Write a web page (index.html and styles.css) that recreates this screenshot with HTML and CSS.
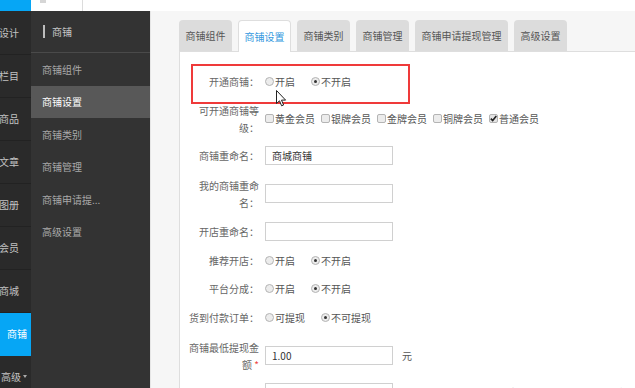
FILE: index.html
```html
<!DOCTYPE html>
<html lang="zh-CN">
<head>
<meta charset="utf-8">
<title>商铺设置</title>
<link rel="stylesheet" href="styles.css">
</head>
<body>
<div class="app">
  <header class="topbar">
    <div class="logo"></div>
    <div class="topnav">
      <div class="topcell"><span class="topicon"></span></div>
    </div>
  </header>
  <div class="layout">
    <nav class="nav1">
      <a class="nav1-item">设计</a>
      <a class="nav1-item">栏目</a>
      <a class="nav1-item">商品</a>
      <a class="nav1-item">文章</a>
      <a class="nav1-item">图册</a>
      <a class="nav1-item">会员</a>
      <a class="nav1-item">商城</a>
      <a class="nav1-item active">商铺</a>
      <a class="nav1-item more">高级<span class="caret"></span></a>
    </nav>
    <nav class="nav2">
      <div class="nav2-head"><span class="bar"></span>商铺</div>
      <a class="nav2-item">商铺组件</a>
      <a class="nav2-item active">商铺设置</a>
      <a class="nav2-item">商铺类别</a>
      <a class="nav2-item">商铺管理</a>
      <a class="nav2-item">商铺申请提...</a>
      <a class="nav2-item">高级设置</a>
    </nav>
    <main class="main">
      <div class="tabs">
        <span class="tab">商铺组件</span>
        <span class="tab active">商铺设置</span>
        <span class="tab">商铺类别</span>
        <span class="tab">商铺管理</span>
        <span class="tab">商铺申请提现管理</span>
        <span class="tab">高级设置</span>
      </div>
      <div class="panel">
        <div class="highlight"></div>
        <svg class="cursor" width="11" height="17" viewBox="0 0 11 17"><path d="M0.5 0.5 L0.5 13.5 L3.5 10.8 L5.6 15.8 L7.6 15 L5.5 10.1 L9.6 10.1 Z" fill="#fff" stroke="#222" stroke-width="1" stroke-linejoin="round"/></svg>
        <form class="form">
          <div class="row">
            <label class="label">开通商铺：</label>
            <span class="opt"><span class="radio"></span>开启</span>
            <span class="opt"><span class="radio on"></span>不开启</span>
          </div>
          <div class="row">
            <label class="label">可开通商铺等级：</label>
            <span class="chk"><span class="box"></span>黄金会员</span>
            <span class="chk"><span class="box"></span>银牌会员</span>
            <span class="chk"><span class="box"></span>金牌会员</span>
            <span class="chk"><span class="box"></span>铜牌会员</span>
            <span class="chk"><span class="box on"><svg width="7" height="7" viewBox="0 0 7 7"><path d="M0.8 3.6 L2.7 5.6 L6.3 1" fill="none" stroke="#222" stroke-width="1.6"/></svg></span>普通会员</span>
          </div>
          <div class="row">
            <label class="label">商铺重命名：</label>
            <span class="input">商城商铺</span>
          </div>
          <div class="row mt11">
            <label class="label">我的商铺重命名：</label>
            <span class="input"></span>
          </div>
          <div class="row mt11">
            <label class="label">开店重命名：</label>
            <span class="input"></span>
          </div>
          <div class="row mt9">
            <label class="label">推荐开店：</label>
            <span class="opt"><span class="radio"></span>开启</span>
            <span class="opt"><span class="radio on"></span>不开启</span>
          </div>
          <div class="row mt8">
            <label class="label">平台分成：</label>
            <span class="opt"><span class="radio"></span>开启</span>
            <span class="opt"><span class="radio on"></span>不开启</span>
          </div>
          <div class="row mt9">
            <label class="label">货到付款订单：</label>
            <span class="opt"><span class="radio"></span>可提现</span>
            <span class="opt"><span class="radio on"></span>不可提现</span>
          </div>
          <div class="row mt11">
            <label class="label">商铺最低提现金额 <i class="req">*</i></label>
            <span class="input">1.00</span>
            <span class="unit">元</span>
          </div>
          <div class="row">
            <label class="label">提现处理时间 <i class="req">*</i></label>
            <span class="input">1</span>
            <span class="hint">(0~24天)不为0且会员申请提现后须在规定天数内完成</span>
          </div>
        </form>
      </div>
    </main>
  </div>
</div>
</body>
</html>
```
FILE: styles.css
```css
* { box-sizing: border-box; }
html, body { margin: 0; padding: 0; }
body {
  width: 635px;
  height: 388px;
  overflow: hidden;
  font-family: "Noto Sans CJK SC", "Noto Sans", sans-serif;
  font-size: 10px;
  color: #555;
  background: #f6f6f6;
}
a { text-decoration: none; }

.app { display: flex; flex-direction: column; height: 388px; }

.topbar { display: flex; height: 11px; flex: none; }
.logo { width: 31px; background: #06a6f5; }
.topnav { flex: 1; background: #fff; display: flex; }
.topcell { width: 52px; border-right: 1px solid #dcdcdc; position: relative; }
.topicon { display: block; width: 6px; height: 3px; margin-left: 9px; background: #d6d6d6; }

.layout { display: flex; flex: 1; min-height: 0; }

.nav1 {
  width: 31px;
  flex: none;
  background: #2a2a2a;
  overflow: hidden;
  display: flex;
  flex-direction: column;
  padding-top: 0.5px;
}
.nav1-item {
  height: 43px;
  flex: none;
  display: flex;
  align-items: center;
  justify-content: flex-end;
  white-space: nowrap;
  padding-right: 12px;
  color: #c2c2c2;
  font-size: 10px;
  border-bottom: 1px solid #222;
}
.nav1-item.active { background: #06a6f5; color: #fff; padding-right: 4px; border-bottom-color: #06a6f5; }
.nav1-item.more { padding-right: 4px; }
.caret {
  display: inline-block;
  width: 0; height: 0;
  margin-left: 2px;
  border-left: 2.5px solid transparent;
  border-right: 2.5px solid transparent;
  border-top: 3px solid #aaa;
}

.nav2 {
  width: 119px;
  flex: none;
  background: #333;
  display: flex;
  flex-direction: column;
}
.nav2-head {
  height: 42px;
  flex: none;
  display: flex;
  align-items: center;
  padding-left: 12px;
  color: #c8c8c8;
  font-size: 10px;
  border-bottom: 1px solid #4a4a4a;
}
.nav2-head .bar { width: 2px; height: 13px; background: #bdbdbd; margin-right: 7px; }
.nav2-item {
  height: 32.5px;
  flex: none;
  display: flex;
  align-items: center;
  padding-left: 11px;
  color: #a9a9a9;
}
.nav2-item.active { background: #585858; color: #fff; }

.main {
  flex: 1;
  min-width: 0;
  background: #f6f6f6;
  border-left: 1px solid #e6e6e6;
  padding: 8.5px 0 0 28px;
  display: flex;
  flex-direction: column;
}
.tabs { display: flex; gap: 6px; height: 31px; flex: none; align-items: flex-end; }
.tab {
  height: 30.5px;
  padding: 0 6.5px;
  display: flex;
  align-items: center;
  background: #dcdcdc;
  color: #555;
  border-radius: 4px 4px 0 0;
  white-space: nowrap;
}
.tab.active {
  background: #fff;
  color: #3398de;
  border: 1px solid #dedede;
  border-bottom: none;
  height: 31.5px;
  padding: 0 5.5px;
  margin-bottom: -1px;
  position: relative;
  z-index: 1;
}

.panel {
  flex: 1;
  background: #fff;
  border-top: 1px solid #dedede;
  border-left: 1px solid #dedede;
  position: relative;
}
.highlight {
  position: absolute;
  left: 11px;
  top: 12px;
  width: 219px;
  height: 40px;
  border: 2px solid #ef3a3a;
  pointer-events: none;
}
.cursor { position: absolute; left: 96px; top: 38px; z-index: 2; }

.form { padding: 20px 0 0 9px; display: flex; flex-direction: column; }
.row { display: flex; align-items: center; min-height: 20px; margin-top: 10px; white-space: nowrap; }
.row:first-child { margin-top: 0; }
.row.mt8 { margin-top: 8px; }
.row.mt9 { margin-top: 9px; }
.row.mt11 { margin-top: 11px; }

.label {
  width: 70px;
  flex: none;
  text-align: right;
  line-height: 17px;
  white-space: normal;
  margin-right: 6px;
  color: #666;
}
.req { font-style: normal; color: #e44; }

.opt { display: flex; align-items: center; margin-right: 16px; color: #555; }
.radio {
  width: 9px; height: 9px;
  border-radius: 50%;
  border: 1px solid #b4b4b4;
  background: #ececec;
  margin-right: 1px;
  display: flex; align-items: center; justify-content: center;
}
.radio.on::after { content: ""; width: 3px; height: 3px; border-radius: 50%; background: #333; }

.chk { display: flex; align-items: center; margin-right: 6px; color: #555; }
.box {
  width: 9px; height: 9px;
  border-radius: 2px;
  border: 1px solid #b4b4b4;
  background: #ececec;
  margin-right: 1px;
  display: flex; align-items: center; justify-content: center;
}
.box.on { background: #e4e4e4; }

.input {
  width: 128px;
  height: 19px;
  border: 1px solid #d0d0d0;
  background: #fff;
  padding: 0 6px;
  display: flex;
  align-items: center;
  color: #333;
  flex: none;
}
.unit { margin-left: 9px; color: #555; }
.hint { margin-left: 9px; color: #888; }
```
